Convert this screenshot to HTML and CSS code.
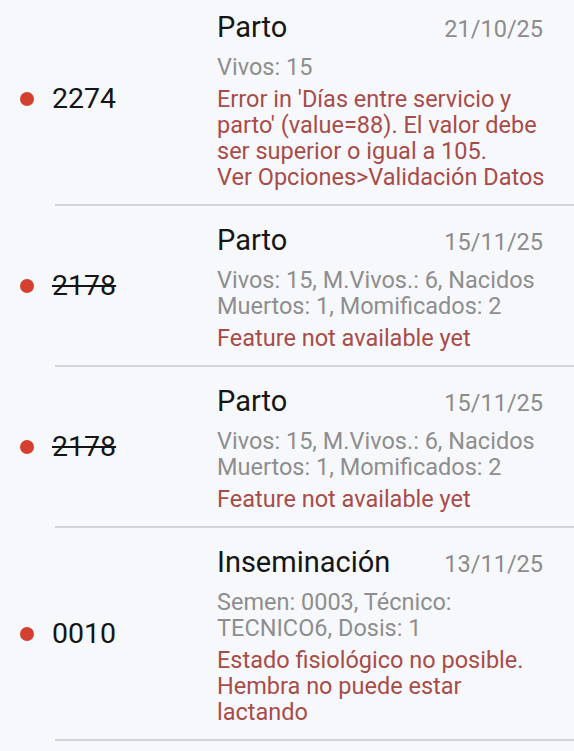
FILE: index.html
```html
<!DOCTYPE html>
<html lang="es">
<head>
  <meta charset="UTF-8" />
  <meta name="viewport" content="width=device-width, initial-scale=1.0" />
  <title>Eventos</title>
  <link rel="stylesheet" href="styles.css">
</head>
<body>

  <div class="event-list">

    <div class="event-item">
      <div class="event-tag">
        <span class="status-dot"></span>
        <span class="animal-id">2274</span>
      </div>
      <div class="event-body">
        <div class="event-head">
          <span class="event-title">Parto</span>
          <span class="event-date">21/10/25</span>
        </div>
        <div class="event-detail">Vivos: 15</div>
        <div class="event-error">Error in 'Días entre servicio y parto' (value=88). El valor debe ser superior o igual a 105.<br>Ver Opciones&gt;Validación Datos</div>
      </div>
    </div>
    <div class="divider"></div>

    <div class="event-item">
      <div class="event-tag">
        <span class="status-dot"></span>
        <span class="animal-id removed">2178</span>
      </div>
      <div class="event-body">
        <div class="event-head">
          <span class="event-title">Parto</span>
          <span class="event-date">15/11/25</span>
        </div>
        <div class="event-detail">Vivos: 15, M.Vivos.: 6, Nacidos Muertos: 1, Momificados: 2</div>
        <div class="event-error">Feature not available yet</div>
      </div>
    </div>
    <div class="divider"></div>

    <div class="event-item">
      <div class="event-tag">
        <span class="status-dot"></span>
        <span class="animal-id removed">2178</span>
      </div>
      <div class="event-body">
        <div class="event-head">
          <span class="event-title">Parto</span>
          <span class="event-date">15/11/25</span>
        </div>
        <div class="event-detail">Vivos: 15, M.Vivos.: 6, Nacidos Muertos: 1, Momificados: 2</div>
        <div class="event-error">Feature not available yet</div>
      </div>
    </div>
    <div class="divider"></div>

    <div class="event-item">
      <div class="event-tag">
        <span class="status-dot"></span>
        <span class="animal-id">0010</span>
      </div>
      <div class="event-body">
        <div class="event-head">
          <span class="event-title">Inseminación</span>
          <span class="event-date">13/11/25</span>
        </div>
        <div class="event-detail">Semen: 0003, Técnico: TECNICO6, Dosis: 1</div>
        <div class="event-error">Estado fisiológico no posible. Hembra no puede estar lactando</div>
      </div>
    </div>
    <div class="divider"></div>

  </div>

</body>
</html>
```

FILE: styles.css
```css
body {
  font-family: Roboto, "Noto Sans", Arial, sans-serif;
  margin: 0;
  padding: 0;
  background: #f7f8fc;
  overflow: hidden;
}

.event-list {
  margin-top: -7px;
}

.event-item {
  display: flex;
  align-items: center;
  padding: 14px 23px 14px 20px;
}

.event-tag {
  width: 197px;
  flex-shrink: 0;
  display: flex;
  align-items: center;
}

.status-dot {
  width: 14px;
  height: 14px;
  border-radius: 50%;
  background: #d4402f;
  margin-right: 18px;
}

.animal-id {
  font-size: 28.5px;
  color: #151515;
}

.animal-id.removed {
  text-decoration: line-through;
}

.event-body {
  flex: 1;
  min-width: 0;
}

.event-head {
  display: flex;
  justify-content: space-between;
  align-items: baseline;
  line-height: 40px;
}

.event-title {
  font-size: 29px;
  color: #151515;
}

.event-date {
  font-size: 23.5px;
  color: #8c8c8c;
  margin-right: 8px;
}

.event-detail,
.event-error {
  font-size: 23.5px;
  line-height: 26px;
}

.event-detail {
  color: #8e8e8e;
  margin-top: 5px;
}

.event-error {
  color: #a84c48;
  margin-top: 6px;
}

.divider {
  height: 2px;
  margin-left: 55px;
  background: #d3d4d8;
}
```
